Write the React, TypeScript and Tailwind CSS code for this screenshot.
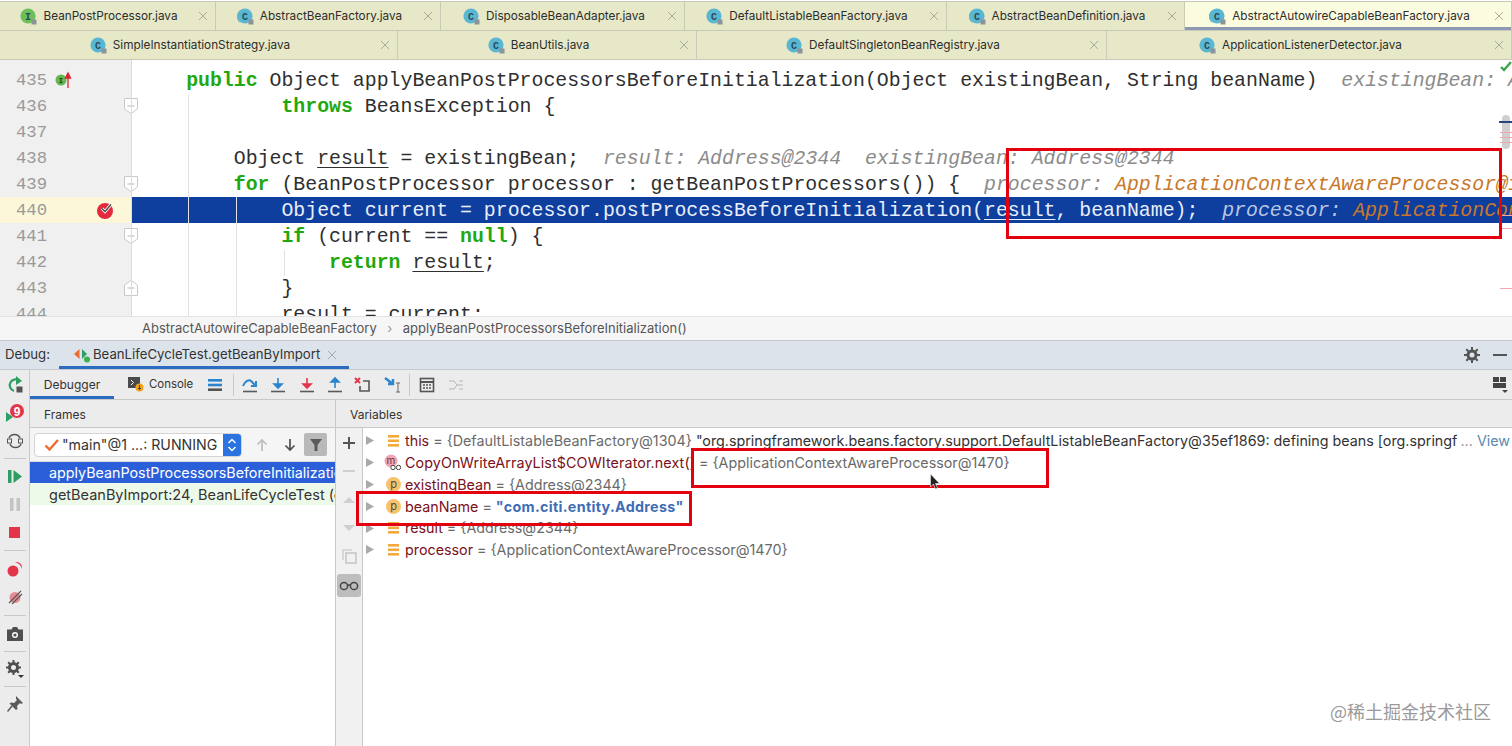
import type { ReactNode } from "react";

const red = "absolute border-[3px] border-[#e3000f] pointer-events-none";

function FileIcon({ letter = "C", abstract = false }: { letter?: string; abstract?: boolean }) {
  const fill = letter === "I" ? "#6cc05a" : "#5ab7d3";
  return (
    <svg width="18" height="18" viewBox="0 0 18 18" className="shrink-0">
      {abstract && <path d="M3 2.5A8 8 0 0 0 3 14.5" fill="none" stroke="#7fa9b8" strokeWidth="1" />}
      <circle cx="8" cy="8" r="7.6" fill={fill} />
      <text x="8" y="11.5" textAnchor="middle" fontSize="10" fontFamily="Liberation Mono, monospace" fontWeight="700" fill="#2a4a55">
        {letter}
      </text>
      <rect x="11.5" y="11.5" width="5" height="5" fill="#8b949b" />
    </svg>
  );
}

function CloseX() {
  return (
    <svg width="10" height="10" viewBox="0 0 10 10" className="absolute right-[7px] top-1/2 -translate-y-1/2">
      <path d="M1 1l8 8M9 1l-8 8" stroke="#a9ab9c" strokeWidth="1" />
    </svg>
  );
}

function Tab({ name, width, abstract, letter, active }: { name: string; width: number; abstract?: boolean; letter?: string; active?: boolean }) {
  return (
    <div
      style={{ width }}
      className={`relative flex h-full shrink-0 items-center justify-center gap-[5px] border-r border-[#c9cbb4] pr-[17px] pt-[2px] text-[11.75px] text-[#2d2d2d] ${active ? "bg-[#fbfbe0]" : ""}`}
    >
      <FileIcon abstract={abstract} letter={letter} />
      <span>{name}</span>
      <CloseX />
      {active && <div className="absolute bottom-0 left-0 h-[3px] w-full bg-[#8d98b2]" />}
    </div>
  );
}

function Kw({ children }: { children: ReactNode }) {
  return <span className="font-bold text-[#1fa80f]">{children}</span>;
}
function Hint({ children }: { children: ReactNode }) {
  return <span className="italic text-[#8b8b8b]">{children}</span>;
}
function Org({ children }: { children: ReactNode }) {
  return <span className="italic text-[#c8782a]">{children}</span>;
}
function U({ children }: { children: ReactNode }) {
  return <span className="underline underline-offset-[3px]">{children}</span>;
}

function Fold({ up }: { up?: boolean }) {
  return (
    <svg width="14" height="16" viewBox="0 0 14 16" className="absolute left-[124px] top-[5px]">
      <path
        d={up ? "M.5 15.5V5L7 .5 13.5 5v10.5z" : "M.5.5h13V11L7 15.5.5 11z"}
        fill="#fff"
        stroke="#c9c9c9"
      />
      <path d="M3.5 8h7" stroke="#b5b5b5" />
    </svg>
  );
}

function Line({ n, children, gutter, fold, current }: { n: number; children?: ReactNode; gutter?: ReactNode; fold?: "up" | "down"; current?: boolean }) {
  return (
    <div className="flex h-[26px] w-full">
      <div className={`relative h-full w-[131px] shrink-0 pl-[16px] pt-px text-[17.3px] leading-[26px] text-[#9a9a9a] ${current ? "bg-[#fbf7d8]" : "bg-[#f0f0f0]"}`}>
        {n}
        {gutter}
        {fold && <Fold up={fold === "up"} />}
      </div>
      <pre className={`h-full flex-1 overflow-hidden whitespace-pre pl-[7.5px] pt-px font-['Liberation_Mono',monospace] text-[19.85px] leading-[26px] ${current ? "bg-[#0e3e9e] text-[#e8eefb]" : "text-[#2f2f2f]"}`}>
        {children}
      </pre>
    </div>
  );
}

function Editor() {
  return (
    <div className="relative h-[256px] shrink-0 overflow-hidden bg-white pt-[7px] font-['Liberation_Mono',monospace]">
      <div className="absolute left-0 top-0 h-[7px] w-[131px] bg-[#f0f0f0]" />
      <Line
        n={435}
        gutter={
          <svg width="24" height="20" viewBox="0 0 24 20" className="absolute left-[54px] top-[3px]">
            <circle cx="7" cy="10" r="5.5" fill="#62b850" />
            <text x="7" y="13" textAnchor="middle" fontSize="8" fontWeight="700" fill="#27481f">I</text>
            <path d="M14 5v13M11.5 8 14 3l2.5 5z" stroke="#e0222f" strokeWidth="1.3" fill="#e0222f" />
          </svg>
        }
      >
        {"    "}<Kw>public</Kw> Object applyBeanPostProcessorsBeforeInitialization(Object existingBean, String beanName)  <Hint>existingBean: Address@2344</Hint>
      </Line>
      <Line n={436} fold="down">
        {"            "}<Kw>throws</Kw> BeansException {"{"}
      </Line>
      <Line n={437} />
      <Line n={438}>
        {"        "}Object <U>result</U> = existingBean;  <Hint>result: Address@2344  existingBean: Address@2344</Hint>
      </Line>
      <Line n={439} fold="down">
        {"        "}<Kw>for</Kw> (BeanPostProcessor processor : getBeanPostProcessors()) {"{"}  <Hint>processor: </Hint><Org>ApplicationContextAwareProcessor@1470</Org>
      </Line>
      <Line
        n={440}
        current
        gutter={
          <svg width="20" height="20" viewBox="0 0 20 20" className="absolute left-[96px] top-[3px]">
            <circle cx="9" cy="11" r="8" fill="#e5293f" />
            <path d="M6 8.5l3 3 6-7" fill="none" stroke="#fff" strokeWidth="3" />
            <path d="M6 8.5l3 3 6-7" fill="none" stroke="#4a4a4a" strokeWidth="1.4" />
          </svg>
        }
      >
        {"            "}Object current = processor.postProcessBeforeInitialization(<U>result</U>, beanName);  <span className="italic text-[#b9c6e4]">processor: </span><Org>ApplicationContextAwareProcessor@1470</Org>
      </Line>
      <Line n={441} fold="down">
        {"            "}<Kw>if</Kw> (current == <Kw>null</Kw>) {"{"}
      </Line>
      <Line n={442}>
        {"                "}<Kw>return</Kw> <U>result</U>;
      </Line>
      <Line n={443} fold="up">
        {"            "}{"}"}
      </Line>
      <Line n={444}>
        {"            "}<U>result</U> = current;
      </Line>

      {/* indent guides and the fold line */}
      <div className="absolute left-[131px] top-0 h-full w-px bg-[#dcdcdc]" />
      <div className="absolute left-[188px] top-[35px] h-full w-px bg-[#e2e2e2]" />
      <div className="absolute left-[236px] top-[137px] h-full w-px bg-[#e2e2e2]" />
      <div className="absolute left-[284px] top-[190px] h-[26px] w-px bg-[#e2e2e2]" />

      {/* error stripe */}
      <svg width="12" height="20" viewBox="0 0 12 20" className="absolute right-0 top-0">
        <path d="M1 7l3 3 7-8" fill="none" stroke="#3aa64a" strokeWidth="2.4" />
      </svg>
      <div className="absolute right-[2px] top-[55px] h-[34px] w-[8px] rounded-[4px] bg-[#cfcfcf]" />
      <div className="absolute right-0 top-[61px] h-[2px] w-[13px] bg-[#27457f]" />
      <div className="absolute right-0 top-[72px] h-px w-[12px] bg-[#f0a8ac]" />
      <div className="absolute right-0 top-[77px] h-px w-[12px] bg-[#f0a8ac]" />
      <div className="absolute right-0 top-[82px] h-px w-[12px] bg-[#f0a8ac]" />
      <div className="absolute right-0 top-[155px] h-px w-[12px] bg-[#f0a8ac]" />
      <div className="absolute right-0 top-[168px] h-px w-[12px] bg-[#f0a8ac]" />
      <div className="absolute right-0 top-[228px] h-px w-[12px] bg-[#f0a8ac]" />
    </div>
  );
}

function ToolIcon({ children, w = 20 }: { children: ReactNode; w?: number }) {
  return (
    <svg width={w} height="18" viewBox={`0 0 ${w} 18`} className="shrink-0">
      {children}
    </svg>
  );
}

function DebugToolbar() {
  const bar = <path d="M3 15.5h14" stroke="#5b5b5b" strokeWidth="1.6" />;
  return (
    <div className="flex h-[30px] shrink-0 items-center border-b border-[#c9c9c9] bg-[#ececec] text-[12px] text-[#333]">
      <div className="flex h-full w-[84px] items-center justify-center border-b-[3px] border-[#2b6cc0] pt-[4px]">Debugger</div>
      <div className="ml-[14px] flex items-center gap-[5px]">
        <svg width="16" height="16" viewBox="0 0 16 16" className="shrink-0">
          <rect x="0" y="1" width="12" height="11" fill="#4b4b4b" />
          <path d="M3 4l2.5 2.5L3 9" fill="none" stroke="#fff" />
          <circle cx="11.5" cy="11.5" r="4" fill="#f0a11f" />
          <path d="M11.5 9v4.5M10 12l1.5 1.5L13 12" fill="none" stroke="#444" />
        </svg>
        <span className="pt-px text-[11.4px]">Console</span>
      </div>
      <svg width="16" height="14" viewBox="0 0 16 14" className="ml-[15px] shrink-0">
        <rect y="1" width="14" height="2.6" fill="#2b84cc" />
        <rect y="5.7" width="14" height="2.6" fill="#2b84cc" />
        <rect y="10.4" width="14" height="2.6" fill="#555" />
      </svg>
      <div className="ml-[9px] h-[22px] w-px bg-[#c9c9c9]" />
      <div className="ml-[6px] flex items-center gap-[8.3px]">
        <ToolIcon>
          <path d="M3 10c2-5 6-7 8-5l4 4M16 5v5h-5" fill="none" stroke="#2b84cc" strokeWidth="2" />
          {bar}
        </ToolIcon>
        <ToolIcon>
          <path d="M10 2v9M6 8l4 4 4-4z" fill="#2b84cc" stroke="#2b84cc" strokeWidth="1.6" />
          {bar}
        </ToolIcon>
        <ToolIcon>
          <path d="M10 2v9M6 8l4 4 4-4z" fill="#e3354a" stroke="#e3354a" strokeWidth="1.6" />
          {bar}
        </ToolIcon>
        <ToolIcon>
          <path d="M10 12V4M6 6l4-4 4 4z" fill="#2b84cc" stroke="#2b84cc" strokeWidth="1.6" />
          {bar}
        </ToolIcon>
        <ToolIcon>
          <path d="M2 2l5 5M7 2l-5 5" stroke="#e3354a" strokeWidth="2" />
          <path d="M10 5h6v10H7v-5" fill="none" stroke="#555" strokeWidth="1.6" />
        </ToolIcon>
        <ToolIcon>
          <path d="M3 2l8 6M11 3v5H6" fill="none" stroke="#2b84cc" strokeWidth="2.4" />
          <path d="M14 7h4M16 7v9M14 16h4" fill="none" stroke="#666" />
        </ToolIcon>
      </div>
      <div className="ml-[7px] h-[22px] w-px bg-[#c9c9c9]" />
      <svg width="16" height="16" viewBox="0 0 16 16" className="ml-[9px] shrink-0">
        <rect x="1.5" y="1.5" width="13" height="13" fill="none" stroke="#555" strokeWidth="1.6" />
        <path d="M2 5h12" stroke="#555" strokeWidth="2" />
        <path d="M4 8h2M7 8h2M10 8h2M4 11h2M7 11h2M10 11h2" stroke="#555" strokeWidth="1.6" />
      </svg>
      <svg width="16" height="14" viewBox="0 0 16 14" className="ml-[13px] shrink-0">
        <path d="M1 3h5l3 4-3 4H1M15 3h-4M15 7H9M15 11h-4" fill="none" stroke="#b5b5b5" />
      </svg>
      <svg width="16" height="18" viewBox="0 0 16 18" className="ml-auto mr-[4px] shrink-0">
        <path d="M1 1h6v5H1zM8 1h6v5H8zM1 7h13v5H1z" fill="#444" />
        <path d="M10 14h6l-3 3z" fill="#444" />
      </svg>
    </div>
  );
}

function Sep({ my }: { my: string }) {
  return <div className={`h-px w-[22px] shrink-0 bg-[#c9c9c9] ${my}`} />;
}

function RailItem({ children }: { children: ReactNode }) {
  return <div className="flex h-[28px] shrink-0 items-center justify-center">{children}</div>;
}

function LeftRail() {
  return (
    <div className="flex w-[30px] shrink-0 flex-col items-center border-r border-[#c9c9c9] bg-[#ececec] pt-px">
      <RailItem>
        <svg width="18" height="18" viewBox="0 0 18 18">
          <path d="M14 5A6 6 0 1 0 8 15" fill="none" stroke="#2f9e62" strokeWidth="2.2" />
          <path d="M10 0l6 5-6 4z" fill="#2f9e62" />
          <rect x="10.5" y="10.5" width="6" height="6" fill="#555" />
        </svg>
      </RailItem>
      <RailItem>
        <svg width="18" height="18" viewBox="0 0 18 18">
          <path d="M0 8l7 5-7 5z" fill="#2f9e62" />
          <circle cx="11" cy="7" r="7" fill="#e3354a" />
          <text x="11" y="11.5" textAnchor="middle" fontSize="12" fontWeight="700" fontFamily="Liberation Sans, sans-serif" fill="#fff">9</text>
        </svg>
      </RailItem>
      <RailItem>
        <svg width="16" height="18" viewBox="0 0 16 18">
          <path d="M2 6a6 6 0 0 1 11 0M14 12a6 6 0 0 1-11 0" fill="none" stroke="#555" strokeWidth="1.5" />
          <rect x="0.5" y="7" width="4" height="4" fill="none" stroke="#555" />
          <rect x="11.5" y="7" width="4" height="4" fill="none" stroke="#555" />
        </svg>
      </RailItem>
      <Sep my="my-[3px]" />
      <RailItem>
        <svg width="14" height="13" viewBox="0 0 14 13">
          <rect width="3.5" height="13" fill="#2f9e62" />
          <path d="M5.5 0 14 6.5 5.5 13z" fill="#2f9e62" />
        </svg>
      </RailItem>
      <RailItem>
        <svg width="10" height="13" viewBox="0 0 10 13">
          <rect width="3.5" height="13" fill="#c3c3c3" />
          <rect x="6.5" width="3.5" height="13" fill="#c3c3c3" />
        </svg>
      </RailItem>
      <RailItem>
        <div className="h-[11px] w-[11px] bg-[#e3354a]" />
      </RailItem>
      <Sep my="my-[4px]" />
      <RailItem>
        <svg width="16" height="16" viewBox="0 0 16 16">
          <circle cx="6" cy="10" r="5.5" fill="#e3354a" />
          <path d="M8 1.5a5 5 0 0 1 6.5 6.5A6.5 6.5 0 0 0 8 1.5z" fill="#e3354a" />
        </svg>
      </RailItem>
      <RailItem>
        <svg width="16" height="16" viewBox="0 0 16 16">
          <circle cx="8" cy="8.5" r="5.5" fill="#e88a94" />
          <path d="M2 14 14 2M5 15 15 5" stroke="#555" strokeWidth="1.1" />
        </svg>
      </RailItem>
      <Sep my="my-[4px]" />
      <RailItem>
        <svg width="16" height="14" viewBox="0 0 16 14">
          <path d="M0 2.5h4.5L6 0h4l1.5 2.5H16V14H0z" fill="#4f4f4f" />
          <circle cx="8" cy="8" r="3" fill="#fff" />
          <circle cx="8" cy="8" r="1.6" fill="#4f4f4f" />
        </svg>
      </RailItem>
      <Sep my="my-[3px]" />
      <RailItem>
        <svg width="18" height="18" viewBox="0 0 18 18">
          <circle cx="7.5" cy="7.5" r="4" fill="none" stroke="#4f4f4f" strokeWidth="3" />
          <path d="M7.5 0v3M7.5 12v3M0 7.5h3M12 7.5h3M2.2 2.2l2 2M10.8 10.8l2 2M12.8 2.2l-2 2M2.2 12.8l2-2" stroke="#4f4f4f" strokeWidth="2" />
          <path d="M12 15h6l-3 3z" fill="#333" />
        </svg>
      </RailItem>
      <Sep my="my-[3px]" />
      <RailItem>
        <svg width="16" height="16" viewBox="0 0 16 16">
          <path d="M9 0l7 7-2 1-1-1-3 3 .5 3-1.500 1L2.500 7.500 4 6.500l3 .5 3-3-1-1z" fill="#5a5a5a" />
          <path d="M5 10 .5 15.500" stroke="#5a5a5a" strokeWidth="1.5" />
        </svg>
      </RailItem>
    </div>
  );
}

function FramesPanel() {
  return (
    <div className="flex w-[306px] shrink-0 flex-col border-r border-[#c9c9c9]">
      <div className="flex h-[34px] shrink-0 items-center border-b border-[#dcdcdc] bg-[#f5f5f5] pl-[4px]">
        <div className="flex h-[24px] w-[208px] items-center overflow-hidden rounded-[4px] border border-[#d4d4d4] bg-white pl-[9px] text-[14.2px] text-[#333]">
          <svg width="16" height="14" viewBox="0 0 16 14" className="shrink-0">
            <path d="M1.500 7.500l4 4L14 2" fill="none" stroke="#ef6a2e" strokeWidth="2.4" />
          </svg>
          <span className="ml-[2px] flex-1 whitespace-nowrap">"main"@1 ...: RUNNING</span>
          <div className="flex h-full w-[18px] shrink-0 items-center justify-center bg-[#2a73e0]">
            <svg width="10" height="16" viewBox="0 0 10 16">
              <path d="M1.500 6 5 2.500 8.500 6M1.500 10 5 13.500 8.500 10" fill="none" stroke="#fff" strokeWidth="1.4" />
            </svg>
          </div>
        </div>
        <svg width="14" height="14" viewBox="0 0 14 14" className="ml-[13px] shrink-0">
          <path d="M7 13V2M2.500 6.500 7 2l4.500 4.500" fill="none" stroke="#bdbdbd" strokeWidth="1.700" />
        </svg>
        <svg width="14" height="14" viewBox="0 0 14 14" className="ml-[14px] shrink-0">
          <path d="M7 1v11M2.500 7.500 7 12l4.500-4.500" fill="none" stroke="#4f4f4f" strokeWidth="1.700" />
        </svg>
        <div className="ml-[7px] flex h-[23px] w-[23px] shrink-0 items-center justify-center rounded-[2px] bg-[#b9b9b9]">
          <svg width="14" height="14" viewBox="0 0 14 14">
            <path d="M1 1h12L8.500 7v6h-3V7z" fill="#5a5a5a" />
          </svg>
        </div>
      </div>
      <div className="flex h-[21px] shrink-0 items-center overflow-hidden whitespace-nowrap bg-[#2a5fd9] pl-[19px] text-[14.3px] text-white">applyBeanPostProcessorsBeforeInitialization:414, AbstractAutowireCapableBeanFactory</div>
      <div className="flex h-[22px] shrink-0 items-center overflow-hidden whitespace-nowrap bg-[#eefae9] pl-[19px] pt-px text-[14.5px] text-[#333]">getBeanByImport:24, BeanLifeCycleTest (com.citi)</div>
    </div>
  );
}

function SideButtons() {
  return (
    <div className="flex w-[27px] shrink-0 flex-col items-center gap-[8.300px] border-r border-[#c9c9c9] bg-[#f1f1f1] pt-[5px]">
      <svg width="20" height="20" viewBox="0 0 20 20"><path d="M10 4v12M4 10h12" stroke="#555" strokeWidth="2" /></svg>
      <svg width="20" height="20" viewBox="0 0 20 20"><path d="M4 10h12" stroke="#cfcfcf" strokeWidth="2" /></svg>
      <svg width="20" height="20" viewBox="0 0 20 20"><path d="M4 13l6-6 6 6z" fill="#cfcfcf" /></svg>
      <svg width="20" height="20" viewBox="0 0 20 20"><path d="M4 7l6 6 6-6z" fill="#cfcfcf" /></svg>
      <svg width="20" height="20" viewBox="0 0 20 20">
        <path d="M4 14V4h9" fill="none" stroke="#cfcfcf" strokeWidth="1.500" />
        <rect x="7" y="7" width="10" height="10" fill="none" stroke="#c4c4c4" strokeWidth="1.500" />
      </svg>
      <div className="flex h-[23px] w-[24px] shrink-0 items-center justify-center rounded-[3px] bg-[#bdbdbd]">
        <svg width="20" height="12" viewBox="0 0 20 12">
          <circle cx="5" cy="6" r="3.600" fill="none" stroke="#444" strokeWidth="1.500" />
          <circle cx="15" cy="6" r="3.600" fill="none" stroke="#444" strokeWidth="1.500" />
          <path d="M8 5h4" stroke="#444" strokeWidth="1.500" />
        </svg>
      </div>
    </div>
  );
}

function VarIcon({ kind }: { kind: "field" | "p" | "m" }) {
  if (kind === "field") {
    return (
      <svg width="14" height="14" viewBox="0 0 14 14" className="shrink-0">
        <rect x="1" y="1" width="11" height="2.600" fill="#f4a93d" />
        <rect x="1" y="5.500" width="11" height="2.600" fill="#f4a93d" />
        <rect x="1" y="10" width="11" height="2.600" fill="#f4a93d" />
      </svg>
    );
  }
  if (kind === "p") {
    return (
      <div className="flex h-[15px] w-[15px] shrink-0 items-center justify-center rounded-full bg-[#f7c26c] text-[11px] leading-none text-[#4d4d4d]">p</div>
    );
  }
  return (
    <svg width="17" height="17" viewBox="0 0 17 17" className="shrink-0">
      <circle cx="7" cy="7" r="6.500" fill="#f2a6b4" />
      <text x="7" y="10" textAnchor="middle" fontSize="10" fill="#6b3340">m</text>
      <circle cx="9" cy="13.500" r="2.200" fill="#fff" stroke="#444" />
      <circle cx="14.500" cy="13.500" r="2.200" fill="#fff" stroke="#444" />
    </svg>
  );
}

function VarRow({ kind, name, children, right, wide }: { kind: "field" | "p" | "m"; name: string; children: ReactNode; right?: ReactNode; wide?: boolean }) {
  return (
    <div className="flex h-[21.800px] items-center whitespace-nowrap pl-[2px]">
      <svg width="10" height="11" viewBox="0 0 10 11" className="shrink-0">
        <path d="M1 1l8 4.500L1 10z" fill="#a9a9a9" />
      </svg>
      <div className="flex w-[27px] shrink-0 justify-end pr-[1px] pl-[12px]">
        <VarIcon kind={kind} />
      </div>
      <span className={`ml-[3px] text-[#7a1020] ${wide ? "tracking-[0.1px]" : ""}`}>{name}</span>
      <span className="ml-[4px] min-w-0 flex-1 overflow-hidden text-[#6a6a6a]">{children}</span>
      {right}
    </div>
  );
}

function VariablesPanel() {
  return (
    <div className="min-w-0 flex-1 overflow-hidden bg-white pt-[2px] text-[14.300px]">
      <VarRow
        kind="field"
        name="this"
        right={
          <span className="pr-[2px]">
            <span className="text-[#8a8a8a]">... </span>
            <span className="text-[#5a8ab0]">View</span>
          </span>
        }
      >
        = {"{DefaultListableBeanFactory@1304}"} <span className="text-[#333]">"org.springframework.beans.factory.support.DefaultListableBeanFactory@35ef1869: defining beans [org.springf</span>
      </VarRow>
      <VarRow kind="m" name="CopyOnWriteArrayList$COWIterator.next()" wide>= {"{ApplicationContextAwareProcessor@1470}"}</VarRow>
      <VarRow kind="p" name="existingBean">= {"{Address@2344}"}</VarRow>
      <VarRow kind="p" name="beanName">
        = <span className="font-bold tracking-[0.32px] text-[#3f6db5]">"com.citi.entity.Address"</span>
      </VarRow>
      <VarRow kind="field" name="result">= {"{Address@2344}"}</VarRow>
      <VarRow kind="field" name="processor">= {"{ApplicationContextAwareProcessor@1470}"}</VarRow>
    </div>
  );
}

export default function App() {
  return (
    <div className="relative flex h-[746px] w-[1512px] flex-col overflow-hidden bg-white font-['Inter',sans-serif] text-[13px]">
      {/* editor tabs */}
      <div className="mt-px flex h-[30px] shrink-0 border-y border-[#c8c9b8] bg-[#e6e8c7]">
        <Tab name="BeanPostProcessor.java" width={216} letter="I" />
        <Tab name="AbstractBeanFactory.java" width={225} abstract />
        <Tab name="DisposableBeanAdapter.java" width={244} />
        <Tab name="DefaultListableBeanFactory.java" width={262} />
        <Tab name="AbstractBeanDefinition.java" width={238} abstract />
        <Tab name="AbstractAutowireCapableBeanFactory.java" width={327} abstract active />
      </div>
      <div className="flex h-[29px] shrink-0 border-b border-[#c8c9b8] bg-[#e6e8c7]">
        <Tab name="SimpleInstantiationStrategy.java" width={398} />
        <Tab name="BeanUtils.java" width={299} />
        <Tab name="DefaultSingletonBeanRegistry.java" width={410} />
        <Tab name="ApplicationListenerDetector.java" width={405} />
      </div>

      <Editor />

      {/* breadcrumb */}
      <div className="flex h-[24px] shrink-0 items-center border-t border-[#e2e2e2] bg-[#f6f6f6] pl-[142px] text-[#555]">
        <span>AbstractAutowireCapableBeanFactory</span>
        <span className="mx-[10.500px] text-[#9a9a9a]">›</span>
        <span>applyBeanPostProcessorsBeforeInitialization()</span>
      </div>

      {/* debug title bar */}
      <div className="flex h-[30px] shrink-0 items-center border-y border-[#c6cacf] bg-[#dde3ea] pl-[5px] text-[13.200px] text-[#333]">
        <span>Debug:</span>
        <div className="ml-[9px] flex h-full w-[290px] items-center border-b-[3px] border-[#2b6cc0] pl-[15px] pt-[3px]">
          <svg width="16" height="16" viewBox="0 0 16 16" className="shrink-0">
            <path d="M5.500 2v10L0 7z" fill="#ef6a2e" />
            <path d="M8 2v10l5-5z" fill="#2f9e62" />
            <circle cx="13" cy="12.500" r="3" fill="#38b24a" />
          </svg>
          <span className="ml-[3px] whitespace-nowrap">BeanLifeCycleTest.getBeanByImport</span>
          <svg width="10" height="10" viewBox="0 0 10 10" className="ml-[7px] shrink-0">
            <path d="M1 1l8 8M9 1l-8 8" stroke="#a2a8ae" />
          </svg>
        </div>
        <svg width="16" height="16" viewBox="0 0 16 16" className="ml-auto shrink-0">
          <circle cx="8" cy="8" r="4" fill="none" stroke="#555" strokeWidth="3" />
          <path d="M8 0v3M8 13v3M0 8h3M13 8h3M2.300 2.300l2 2M11.700 11.700l2 2M13.700 2.300l-2 2M2.300 13.700l2-2" stroke="#555" strokeWidth="2" />
        </svg>
        <div className="ml-[13px] mr-[5px] h-[2px] w-[14px] bg-[#555]" />
      </div>

      {/* debug body */}
      <div className="flex min-h-0 flex-1">
        <LeftRail />
        <div className="flex min-w-0 flex-1 flex-col">
          <DebugToolbar />
          <div className="flex h-[28px] shrink-0 items-center border-b border-[#c9c9c9] bg-[#ececec] text-[12px] text-[#333]">
            <div className="flex h-full w-[306px] items-center border-r border-[#c9c9c9] pl-[14px] pt-[3px]">Frames</div>
            <div className="pl-[14px] pt-[3px]">Variables</div>
          </div>
          <div className="flex min-h-0 flex-1">
            <FramesPanel />
            <SideButtons />
            <VariablesPanel />
          </div>
        </div>
      </div>

      {/* annotations */}
      <div className={`${red} left-[1006px] top-[148px] h-[91px] w-[496px]`} />
      <div className={`${red} left-[691px] top-[448px] h-[40px] w-[358px]`} />
      <div className={`${red} left-[356px] top-[491px] h-[35px] w-[336px]`} />

      <svg width="16" height="20" viewBox="0 0 16 20" className="absolute left-[929px] top-[473px]">
        <path d="M1.500 1v13l3-3 2 5 2-1-2-4.500h4z" fill="#222" stroke="#ddd" strokeWidth="0.700" />
      </svg>

      <div className="absolute bottom-[21px] right-[21px] font-['Noto_Sans_CJK_SC',sans-serif] text-[18px] text-[#9a9a9a]">@稀土掘金技术社区</div>
    </div>
  );
}
